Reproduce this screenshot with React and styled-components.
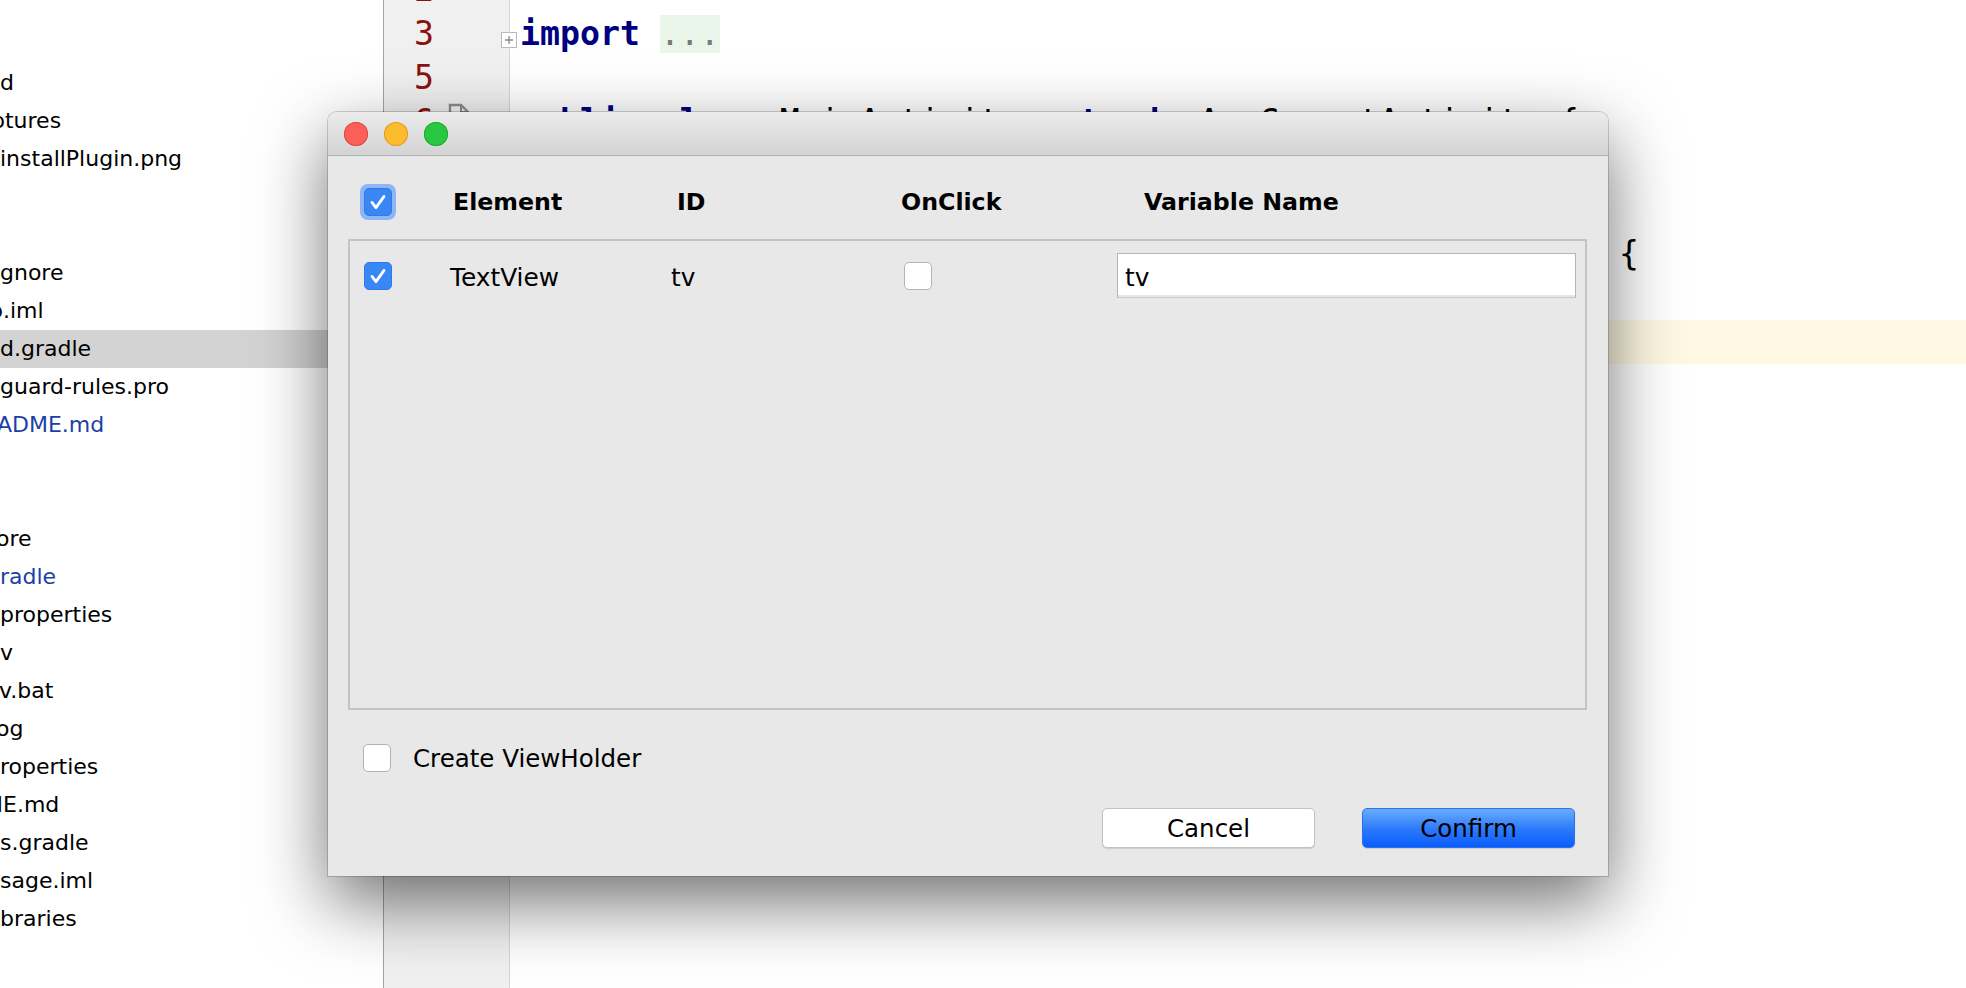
import React from "react";
import styled, { createGlobalStyle } from "styled-components";

const GlobalStyle = createGlobalStyle`
  html, body { margin: 0; padding: 0; background: #ffffff; overflow: hidden; }
  #root { width: 1966px; height: 988px; }
  * { box-sizing: border-box; }
`;

const Screen = styled.div`
  position: relative;
  width: 1966px;
  height: 988px;
  overflow: hidden;
  display: flex;
  background: #ffffff;
`;

/* ---------- project tree ---------- */
const ProjectPanel = styled.div`
  flex: none;
  width: 384px;
  border-right: 1px solid #a4a4a4;
  background: #ffffff;
  padding-top: 64px;
  overflow: hidden;
  font-family: "DejaVu Sans", "Liberation Sans", sans-serif;
  font-size: 22px;
`;

const TreeRow = styled.div`
  height: 38px;
  line-height: 38px;
  white-space: nowrap;
  overflow: hidden;
  color: ${(p) => (p.$modified ? "#1c3fa6" : "#000000")};
  background: ${(p) => (p.$selected ? "#d3d3d3" : "transparent")};
`;

const TreeLabel = styled.span`
  display: inline-block;
  margin-left: ${(p) => p.$shift || 0}px;
`;

/* ---------- gutter ---------- */
const Gutter = styled.div`
  flex: none;
  width: 126px;
  background: #f0f0f0;
  border-right: 1px solid #d4d4d4;
  position: relative;
  z-index: 1;
`;

const Lines = styled.div`
  margin-top: -32px;
`;

const GutterLine = styled.div`
  position: relative;
  height: 44px;
  display: flex;
  align-items: center;
`;

const LineNumber = styled.span`
  width: 50px;
  text-align: right;
  font-family: "DejaVu Sans Mono", "Liberation Mono", monospace;
  font-size: 33.2px;
  line-height: 44px;
  color: #8b1111;
`;

const FoldBox = styled.span`
  position: absolute;
  right: -8px;
  top: 20px;
  width: 16px;
  height: 16px;
  background: #ffffff;
  border: 1px solid #b9b9b9;
  display: flex;
  align-items: center;
  justify-content: center;
`;

const GutterIcon = styled.span`
  position: absolute;
  left: 64px;
  top: 3px;
  width: 22px;
  height: 26px;
  display: flex;
`;

/* ---------- editor ---------- */
const Editor = styled.div`
  flex: 1;
  background: #ffffff;
`;

const CodeLine = styled.div`
  height: 44px;
  line-height: 44px;
  padding-left: 10px;
  white-space: pre;
  font-family: "DejaVu Sans Mono", "Liberation Mono", monospace;
  font-size: 33.2px;
  color: #000000;
  background: ${(p) => (p.$current ? "#fff9e3" : "transparent")};
`;

const Kw = styled.span`
  color: #000080;
  font-weight: bold;
`;

const Annot = styled.span`
  color: #808000;
`;

const Folded = styled.span`
  color: #7a7a7a;
  background: #ebf6eb;
  display: inline-block;
  line-height: 38px;
`;

/* ---------- dialog ---------- */
const Dialog = styled.div`
  position: absolute;
  left: 328px;
  top: 112px;
  width: 1280px;
  height: 764px;
  z-index: 5;
  display: flex;
  flex-direction: column;
  background: #e8e8e8;
  border-radius: 9px 9px 0 0;
  box-shadow: 0 0 0 1px rgba(0, 0, 0, 0.17), 0 26px 70px rgba(0, 0, 0, 0.56);
  font-family: "DejaVu Sans", "Liberation Sans", sans-serif;
  color: #000000;
`;

const TitleBar = styled.div`
  flex: none;
  height: 44px;
  display: flex;
  align-items: center;
  gap: 16px;
  padding-left: 16px;
  border-radius: 9px 9px 0 0;
  background: linear-gradient(#ececec, #d3d3d3);
  border-bottom: 1px solid #b2b2b2;
`;

const Light = styled.span`
  width: 24px;
  height: 24px;
  border-radius: 50%;
  background: ${(p) => p.$fill};
  box-shadow: inset 0 0 0 1px ${(p) => p.$edge};
`;

const Body = styled.div`
  flex: 1;
  display: flex;
  flex-direction: column;
  padding: 28px 21px 28px 20px;
`;

const HeaderRow = styled.div`
  height: 36px;
  display: flex;
  align-items: center;
  padding-left: 12px;
  font-weight: bold;
  font-size: 23.7px;
`;

const Cell = styled.div`
  flex: none;
  width: ${(p) => p.$w}px;
  padding-left: ${(p) => p.$pad || 0}px;
  display: flex;
  align-items: center;
  white-space: nowrap;
`;

const FocusRing = styled.span`
  display: flex;
  padding: 4px;
  border-radius: 8px;
  background: #8db6f2;
`;

const Box = styled.span`
  flex: none;
  width: 28px;
  height: 28px;
  border-radius: 5px;
  display: flex;
  align-items: center;
  justify-content: center;
  background: ${(p) => (p.$checked ? "#3987f5" : "#ffffff")};
  border: 1px solid ${(p) => (p.$checked ? "#2f79ea" : "#b3b3b3")};
`;

const Table = styled.div`
  margin-top: 19px;
  height: 471px;
  border: 2px solid #c4c4c4;
`;

const TableRow = styled.div`
  margin-top: 12px;
  height: 45px;
  display: flex;
  align-items: center;
  font-size: 24.8px;
`;

const RowText = styled.span`
  padding-top: 4px;
`;

const TextField = styled.input`
  flex: 1;
  min-width: 0;
  height: 45px;
  margin-right: 9px;
  padding: 3px 0 0 7px;
  border: 1px solid #b4b4b4;
  border-bottom-color: #c9c9c9;
  box-shadow: inset 0 -2px 0 #e6e6e6;
  background: #ffffff;
  font-family: "DejaVu Sans", "Liberation Sans", sans-serif;
  font-size: 24.8px;
  color: #000000;
  outline: none;
`;

const OptionRow = styled.div`
  margin-top: 34px;
  height: 28px;
  display: flex;
  align-items: center;
  gap: 22px;
  padding-left: 15px;
  font-size: 24.5px;
`;

const ButtonRow = styled.div`
  margin-top: 36px;
  display: flex;
  justify-content: flex-end;
  gap: 47px;
  padding-right: 12px;
`;

const Button = styled.button`
  width: 213px;
  height: 40px;
  border-radius: 5px;
  font-family: "DejaVu Sans", "Liberation Sans", sans-serif;
  font-size: 24.5px;
  color: #000000;
  padding: 0;
  cursor: default;
  border: 1px solid ${(p) => (p.$primary ? "#2a71ef" : "#c2c2c2")};
  background: ${(p) =>
    p.$primary ? "linear-gradient(#6aacfc, #2a78fb 55%, #0a5cfc)" : "#ffffff"};
  box-shadow: 0 1px 1px rgba(0, 0, 0, 0.12);
`;

const Check = () => (
  <svg width="28" height="28" viewBox="0 0 28 28">
    <polyline
      points="7.5,14.5 11.8,20 20.5,8"
      fill="none"
      stroke="#ffffff"
      strokeWidth="3"
      strokeLinecap="round"
      strokeLinejoin="round"
    />
  </svg>
);

const CheckBox = ({ checked }) => <Box $checked={checked}>{checked && <Check />}</Box>;

const tree = [
  { t: "d" },
  { t: "ptures", s: -9 },
  { t: "installPlugin.png" },
  { t: "" },
  { t: "" },
  { t: "gnore" },
  { t: "p.iml", s: -11 },
  { t: "d.gradle", sel: true },
  { t: "guard-rules.pro" },
  { t: "ADME.md", s: -3, mod: true },
  { t: "" },
  { t: "" },
  { t: "ore", s: -4 },
  { t: "radle", mod: true },
  { t: "properties" },
  { t: "v" },
  { t: "v.bat", s: -1 },
  { t: "og", s: -4 },
  { t: "roperties" },
  { t: "ME.md", s: -16 },
  { t: "s.gradle" },
  { t: "sage.iml" },
  { t: "braries" },
];

const code = [
  { n: 2, c: "" },
  { n: 3, c: <><Kw>import</Kw> <Folded>...</Folded></>, fold: true },
  { n: 5, c: "" },
  {
    n: 6,
    icon: true,
    c: <><Kw>public class</Kw> MainActivity <Kw>extends</Kw> AppCompatActivity {"{"}</>,
  },
  { n: 7, c: "" },
  { n: 8, c: <>    <Annot>@Override</Annot></> },
  {
    n: 9,
    c: <>    <Kw>protected void</Kw> onCreate(Bundle savedInstanceState) {"{"}</>,
  },
  { n: 10, c: <>        <Kw>super</Kw>.onCreate(savedInstanceState);</> },
  { n: 11, c: "        setContentView(R.layout.activity_main);", cur: true },
  { n: 12, c: "    }" },
  { n: 13, c: "}" },
];

export default function App() {
  return (
    <>
      <GlobalStyle />
      <Screen>
        <ProjectPanel>
          {tree.map((r, i) => (
            <TreeRow key={i} $selected={r.sel} $modified={r.mod}>
              <TreeLabel $shift={r.s}>{r.t}</TreeLabel>
            </TreeRow>
          ))}
        </ProjectPanel>

        <Gutter>
          <Lines>
            {code.map((l) => (
              <GutterLine key={l.n}>
                <LineNumber>{l.n}</LineNumber>
                {l.icon && (
                  <GutterIcon>
                    <svg width="22" height="26" viewBox="0 0 22 26">
                      <path
                        d="M2 25 V2 H13 L20 9 V25 Z"
                        fill="#f4f4f4"
                        stroke="#8c8c8c"
                        strokeWidth="2.4"
                      />
                      <path d="M13 2 V9 H20" fill="none" stroke="#8c8c8c" strokeWidth="2" />
                    </svg>
                  </GutterIcon>
                )}
                {l.fold && (
                  <FoldBox>
                    <svg width="10" height="10" viewBox="0 0 10 10">
                      <path d="M5 1 V9 M1 5 H9" stroke="#8a8a8a" strokeWidth="1.3" />
                    </svg>
                  </FoldBox>
                )}
              </GutterLine>
            ))}
          </Lines>
        </Gutter>

        <Editor>
          <Lines>
            {code.map((l) => (
              <CodeLine key={l.n} $current={l.cur}>
                {l.c}
              </CodeLine>
            ))}
          </Lines>
        </Editor>

        <Dialog>
          <TitleBar>
            <Light $fill="#fc5f57" $edge="#df4843" />
            <Light $fill="#fdbb2e" $edge="#de9e2a" />
            <Light $fill="#2ac840" $edge="#1fa833" />
          </TitleBar>
          <Body>
            <HeaderRow>
              <Cell $w={93}>
                <FocusRing>
                  <CheckBox checked />
                </FocusRing>
              </Cell>
              <Cell $w={224}>Element</Cell>
              <Cell $w={224}>ID</Cell>
              <Cell $w={243}>OnClick</Cell>
              <Cell $w={300}>Variable Name</Cell>
            </HeaderRow>

            <Table>
              <TableRow>
                <Cell $w={100} $pad={14}>
                  <CheckBox checked />
                </Cell>
                <Cell $w={221}>
                  <RowText>TextView</RowText>
                </Cell>
                <Cell $w={233}>
                  <RowText>tv</RowText>
                </Cell>
                <Cell $w={213}>
                  <CheckBox />
                </Cell>
                <TextField defaultValue="tv" readOnly />
              </TableRow>
            </Table>

            <OptionRow>
              <CheckBox />
              <span>Create ViewHolder</span>
            </OptionRow>

            <ButtonRow>
              <Button>Cancel</Button>
              <Button $primary>Confirm</Button>
            </ButtonRow>
          </Body>
        </Dialog>
      </Screen>
    </>
  );
}
